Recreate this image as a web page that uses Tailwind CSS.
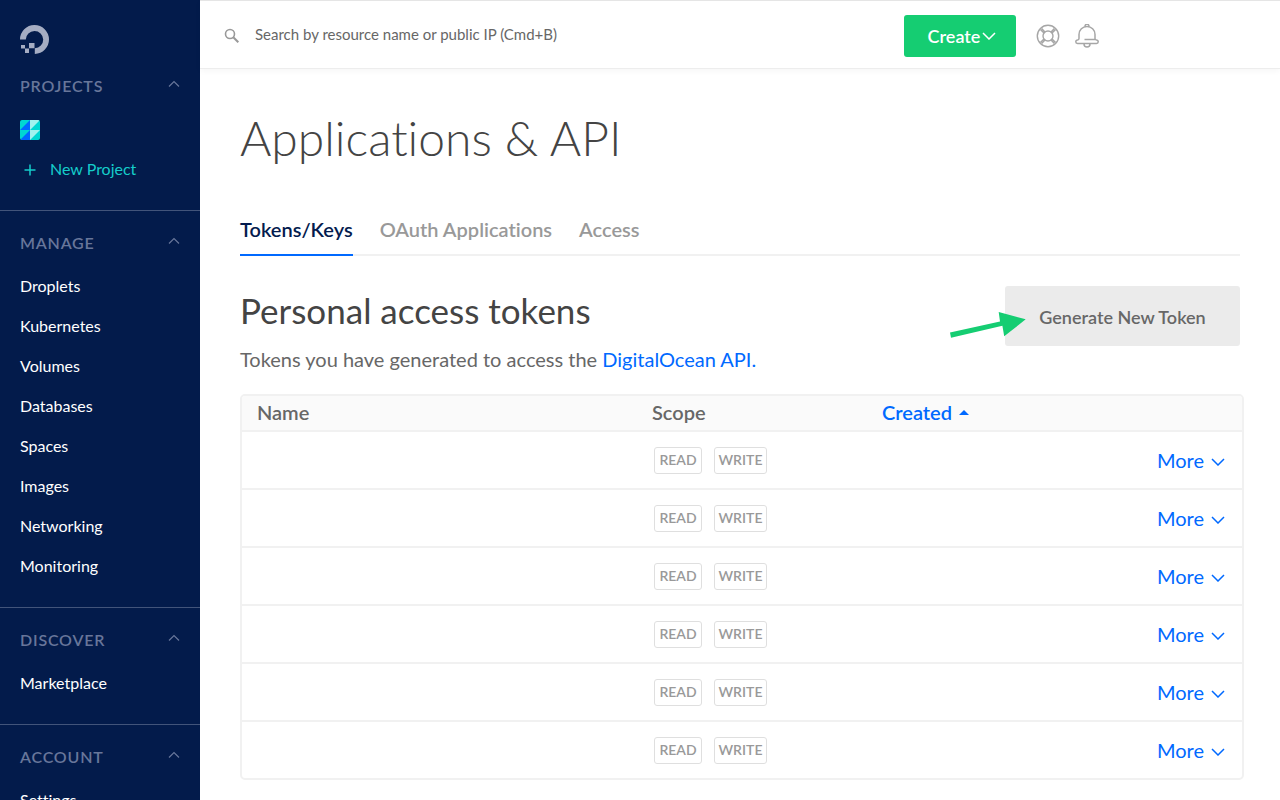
<!DOCTYPE html>
<html lang="en">
<head>
<meta charset="utf-8">
<meta name="viewport" content="width=device-width, initial-scale=1">
<title>Applications &amp; API</title>
<script src="https://cdn.jsdelivr.net/npm/@tailwindcss/browser@4"></script>
</head>
<body class="flex h-screen overflow-hidden bg-white font-['Lato','Open_Sans',sans-serif] text-[#676767] [font-variant-ligatures:none]">

<svg class="hidden" aria-hidden="true">
  <symbol id="chevron-up" viewBox="0 0 12 8"><path d="M1 6.5 6 1.5l5 5" fill="none" stroke="currentColor" stroke-width="1.2"/></symbol>
  <symbol id="chevron-down" viewBox="0 0 14 8"><path d="M1 1l6 6 6-6" fill="none" stroke="currentColor" stroke-width="1.5"/></symbol>
</svg>

<aside class="w-50 shrink-0 overflow-hidden bg-[#031b4b] pt-[25px] text-base text-white">
  <a href="#" aria-label="DigitalOcean home" class="ml-5 block size-[29px]">
    <svg viewBox="0 0 29 29" class="size-full" fill="#a5adc3">
      <path d="M14.800 29v-5.700A8.700 8.700 0 1 0 5.800 14.500H0A14.500 14.500 0 1 1 14.800 29z"/>
      <path d="M9 18h5.500v5.300H9zM5 23.500h4V28H5zM1 20h4v3.500H1z"/>
    </svg>
  </a>

  <section class="border-b border-[#42547a] pb-5 pt-5">
    <button class="flex h-[26px] w-full items-center justify-between pb-[2px] px-5 font-semibold tracking-wider text-[#68769a]">PROJECTS
      <svg class="mb-1 h-2 w-3"><use href="#chevron-up"/></svg></button>
    <ul class="mt-[10px]">
      <li><a href="#" aria-label="Project" class="flex h-10 items-center px-5">
        <svg viewBox="0 0 20 20" class="size-5 overflow-hidden rounded-xs">
          <path fill="#00d7d2" d="M0 0h20v20H0z"/>
          <path fill="#0069ff" d="M10 0v10H0zM10 10v10H0z"/>
          <path fill="#a1f2ee" d="M10 0h10L10 10zM10 10h10L10 20z"/>
        </svg></a></li>
      <li><a href="#" class="flex h-10 items-center gap-[14px] pb-[2px] pl-6 text-[#15cdca]">
        <svg viewBox="0 0 12 12" class="mt-[2px] size-3"><path d="M6 .5v11M.5 6h11" stroke="currentColor" stroke-width="1.500"/></svg>
        New Project</a></li>
    </ul>
  </section>

  <section class="border-b border-[#42547a] pb-5 pt-5">
    <button class="flex h-[26px] w-full items-center justify-between pb-[2px] px-5 font-semibold tracking-wider text-[#68769a]">MANAGE
      <svg class="mb-1 h-2 w-3"><use href="#chevron-up"/></svg></button>
    <ul class="mt-[10px]">
      <li><a href="#" class="flex h-10 items-center px-5 pb-[2px]">Droplets</a></li>
      <li><a href="#" class="flex h-10 items-center px-5 pb-[2px]">Kubernetes</a></li>
      <li><a href="#" class="flex h-10 items-center px-5 pb-[2px]">Volumes</a></li>
      <li><a href="#" class="flex h-10 items-center px-5 pb-[2px]">Databases</a></li>
      <li><a href="#" class="flex h-10 items-center px-5 pb-[2px]">Spaces</a></li>
      <li><a href="#" class="flex h-10 items-center px-5 pb-[2px]">Images</a></li>
      <li><a href="#" class="flex h-10 items-center px-5 pb-[2px]">Networking</a></li>
      <li><a href="#" class="flex h-10 items-center px-5 pb-[2px]">Monitoring</a></li>
    </ul>
  </section>

  <section class="border-b border-[#42547a] pb-5 pt-5">
    <button class="flex h-[26px] w-full items-center justify-between pb-[2px] px-5 font-semibold tracking-wider text-[#68769a]">DISCOVER
      <svg class="mb-1 h-2 w-3"><use href="#chevron-up"/></svg></button>
    <ul class="mt-[10px]">
      <li><a href="#" class="flex h-10 items-center px-5 pb-[2px]">Marketplace</a></li>
    </ul>
  </section>

  <section class="pb-5 pt-5">
    <button class="flex h-[26px] w-full items-center justify-between pb-[2px] px-5 font-semibold tracking-wider text-[#68769a]">ACCOUNT
      <svg class="mb-1 h-2 w-3"><use href="#chevron-up"/></svg></button>
    <ul class="mt-[10px]">
      <li><a href="#" class="flex h-10 items-center px-5 pb-[2px]">Settings</a></li>
    </ul>
  </section>
</aside>

<div class="min-w-0 flex-1">
  <header class="flex h-[69px] items-center border-y border-t-[#e5e5e5] border-b-[#ededed] pl-6 pr-[181px] pt-[2px] shadow-[0_2px_6px_rgba(0,0,0,0.04)]">
    <label for="search" aria-label="Search" class="mr-4 text-[#999]">
      <svg viewBox="0 0 15 15" class="size-[15px]" fill="none" stroke="currentColor" stroke-width="1.600"><circle cx="6" cy="6" r="4.500"/><path d="m9.300 9.300 5 5" stroke-width="2"/></svg>
    </label>
    <input id="search" type="text" placeholder="Search by resource name or public IP (Cmd+B)" class="min-w-0 flex-1 pb-[2px] text-[15px] outline-none placeholder:text-[#676767]">
    <button class="flex h-[42px] w-28 items-center justify-center gap-[2px] rounded-[3px] bg-[#15cd72] pl-1 text-lg font-semibold text-white">Create
      <svg class="h-2 w-[14px]"><use href="#chevron-down"/></svg></button>
    <button aria-label="Support" class="ml-5 text-[#a6a6a6]">
      <svg viewBox="0 0 24 24" class="size-6" fill="none" stroke="currentColor" stroke-width="1.400"><circle cx="12" cy="12" r="10.700"/><circle cx="12" cy="12" r="5"/><path d="m4.400 5.600 3.800 3.600M5.600 4.400l3.600 3.800M19.600 5.600l-3.800 3.600M18.400 4.400l-3.600 3.800M4.400 18.400l3.800-3.600M5.600 19.600l3.600-3.800M19.600 18.400l-3.800-3.600M18.400 19.600l-3.600-3.800"/></svg>
    </button>
    <button aria-label="Notifications" class="ml-[15px] text-[#a6a6a6]">
      <svg viewBox="0 0 24 24" class="size-6" fill="none" stroke="currentColor" stroke-width="1.500"><path d="M10 3.200V2.300a2 2 0 0 1 4 0v.9M9.500 15.500H20V10.500a7.500 7.500 0 0 0-16 0v4q0 1.200-1.500 1.500a1.700 1.700 0 0 0 0 3.400h19a1.700 1.700 0 0 0 0-3.400Q20 15.700 20 14.500M9 19.900a3 3 0 0 0 6 0"/></svg>
    </button>
  </header>

  <main class="px-10 pt-[39px]">
    <h1 class="text-5xl leading-[60px] font-light text-[#444]">Applications &amp; API</h1>

    <nav class="mt-[37px] flex h-[51px] gap-[27px] border-b-2 border-[#f1f1f1] text-xl leading-[48px] font-semibold text-[#999]">
      <a href="#" class="h-[51px] border-b-2 border-[#0069ff] text-[#031b4e]">Tokens/Keys</a>
      <a href="#">OAuth Applications</a>
      <a href="#">Access</a>
    </nav>

    <div class="relative mt-[30px] flex items-start justify-between">
      <div>
        <h2 class="text-[35px] leading-12 text-[#444]">Personal access tokens</h2>
        <p class="mt-2 text-xl leading-[34px]">Tokens you have generated to access the <a href="#" class="text-[#0069ff]">DigitalOcean API.</a></p>
      </div>
      <button class="h-15 w-[235px] rounded-[3px] bg-[#ebebeb] pt-[2px] text-lg font-semibold">Generate New Token</button>
      <svg viewBox="0 0 76 26" class="absolute right-[214px] top-[26px] h-[26px] w-[76px]" fill="#15cd72"><path d="M0 20.500 50 9.500 48.700 0l27 7.300-21.500 17-1.800-10.500L1 25.800z"/></svg>
    </div>

    <div class="-mr-1 mt-[18px] overflow-hidden rounded-[5px] border-2 border-[#f1f1f1]">
      <table class="w-full table-fixed border-separate border-spacing-0 text-left text-xl">
        <thead>
          <tr class="h-[34px] bg-[#fafafa] leading-7">
            <th class="w-[39.5%] p-0 pb-[2px] pl-[15px] font-semibold">Name</th>
            <th class="w-[23%] p-0 pb-[2px] pl-[15px] font-semibold">Scope</th>
            <th class="w-[22%] p-0 pb-[2px] pl-[15px] font-semibold"><button class="flex items-center gap-[7px] text-[#0069ff]">Created
              <svg viewBox="0 0 10 5" class="h-[5px] w-[10px]" fill="currentColor"><path d="M0 5 5 0l5 5z"/></svg></button></th>
            <th aria-label="Actions" class="p-0"></th>
          </tr>
        </thead>
        <tbody id="tokens"></tbody>
      </table>
    </div>
  </main>
</div>

<template id="token-row">
  <tr class="h-[58px]">
    <td class="border-t-2 border-[#f1f1f1] p-0"></td>
    <td class="border-t-2 border-[#f1f1f1] p-0 pl-[17px]"><div class="flex gap-3 text-sm font-semibold text-[#999]">
      <span class="flex h-[27px] w-12 items-center justify-center rounded-[3px] border border-[#dfdfdf]">READ</span>
      <span class="flex h-[27px] w-[53px] items-center justify-center rounded-[3px] border border-[#dfdfdf]">WRITE</span>
    </div></td>
    <td class="border-t-2 border-[#f1f1f1] p-0"></td>
    <td class="border-t-2 border-[#f1f1f1] p-0 pr-[17px]"><button class="ml-auto flex items-center gap-[7px] text-[#0069ff]">More
      <svg class="mt-1 h-2 w-[14px]"><use href="#chevron-down"/></svg></button></td>
  </tr>
</template>
<script>
  const body = document.getElementById('tokens');
  const row = document.getElementById('token-row');
  for (let i = 0; i < 6; i++) body.append(row.content.cloneNode(true));
</script>
</body>
</html>
